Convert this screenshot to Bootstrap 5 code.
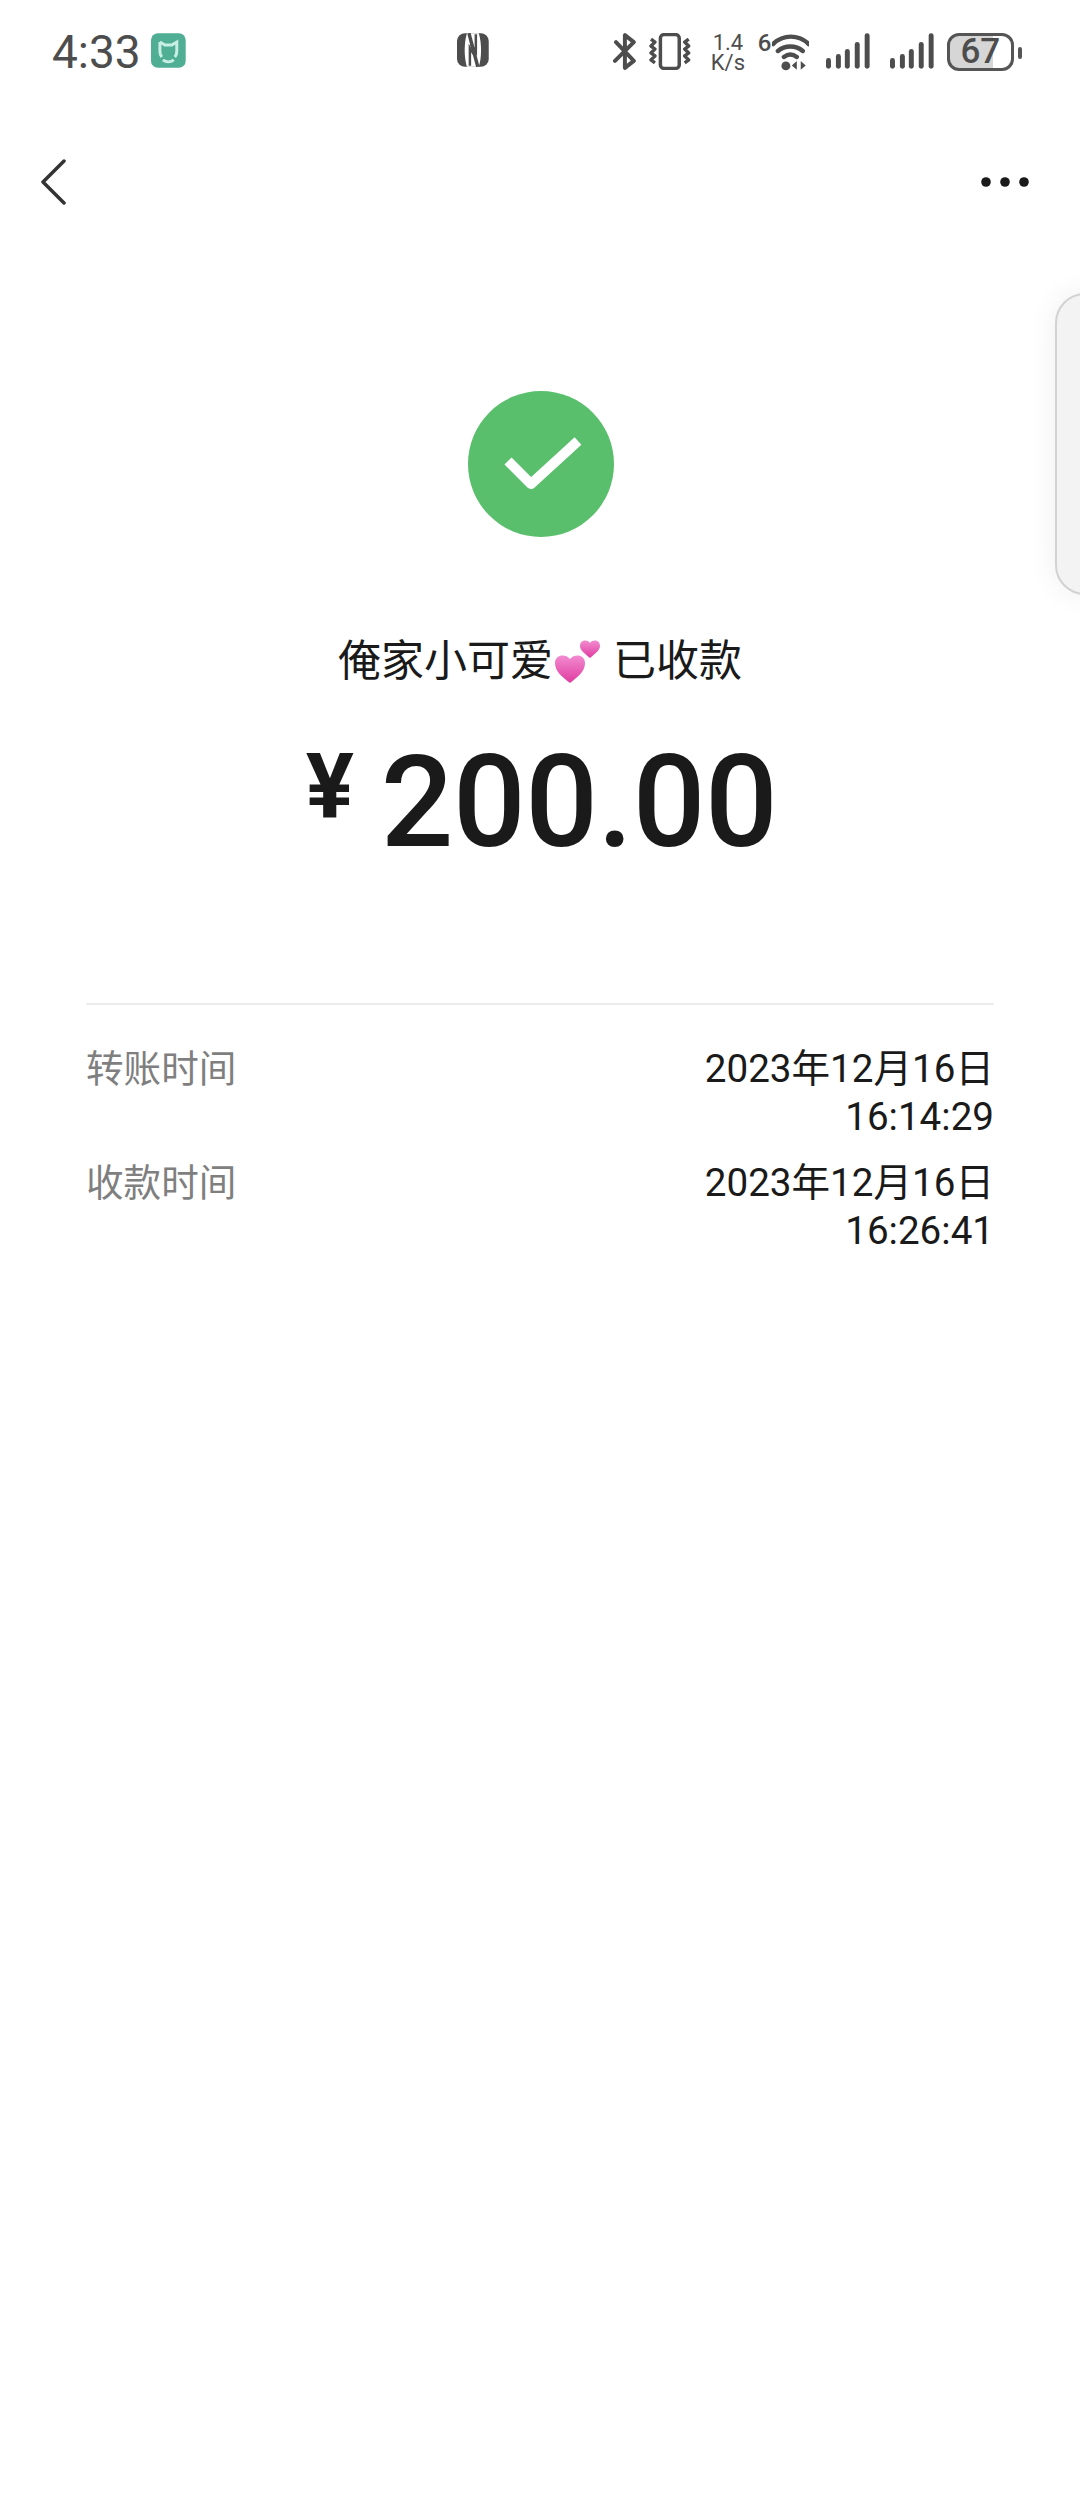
<!DOCTYPE html>
<html lang="zh">
<head>
    <meta charset="UTF-8">
    <title>转账详情</title>
    <link href="https://cdn.jsdelivr.net/npm/bootstrap@5.3.0/dist/css/bootstrap.min.css" rel="stylesheet">
    <style>
        body { background: #fff; font-family: Roboto, "Noto Sans CJK SC", sans-serif; color: #1a1a1a; min-height: 2504px; overflow: hidden; }
        .pantalla { width: 1080px; }
        .barra-estado { height: 72px; padding: 33px 58px 0 52px; color: #4d4d4d; }
        .hora { font-size: 46px; line-height: 38px; width: 100px; }
        .icono-nfc { margin-left: 271px; }
        .icono-bt { margin-left: 124px; }
        .icono-vib { margin-left: 13px; }
        .velocidad { margin-left: 17px; width: 40px; font-size: 22px; line-height: 20px; text-align: center; height: 38px; }
        .wifi-seis { margin-left: 10px; width: 14px; font-size: 24px; line-height: 20px; font-weight: 500; }
        .icono-senal { margin-left: 17px; }
        .icono-senal + .icono-senal { margin-left: 20px; }
        .bateria { margin-left: 13px; width: 68px; height: 38px; border: 3px solid #555; border-radius: 12px; background: linear-gradient(90deg, #d6d6d6 70%, #fff 70%); font-size: 35px; line-height: 32px; text-align: center; font-weight: 500; }
        .bateria-punta { margin-left: 4px; margin-top: 14px; width: 4px; height: 12px; background: #555; border-radius: 2px; }
        .barra-nav { height: 72px; margin-top: 74px; padding: 0 51px 0 40px; }
        .circulo-ok { width: 146px; height: 146px; background: #5abf6c; margin-top: 173px; margin-left: 1px; }
        .marca-ok { margin: 2px 0 0 4px; }
        .nombre { margin-top: 94px; font-size: 43px; line-height: 60px; color: #1a1a1a; }
        .corazones { margin: 0 13px 0 0; }
        .monto { margin-top: 53px; height: 116px; line-height: 116px; }
        .moneda { font-size: 90px; font-weight: 700; line-height: 88px; margin: 0 27px 0 3px; width: 48px; }
        .cifra { font-size: 128px; font-weight: 500; letter-spacing: -.5px; }
        .divisor { margin: 143px 86px 0; border-top: 2px solid #ececec; }
        .detalle { margin: 40px 86px 0; font-size: 38.6px; line-height: 48px; }
        .detalle-fila { margin-bottom: 18px; }
        .etiqueta { color: #7f7f7f; font-size: 37.6px; }
        .valor { color: #1a1a1a; }
        .panel-lateral { position: absolute; left: 1055px; top: 293px; width: 60px; height: 302px; background: #f3f3f3; border: 2px solid #d2d2d2; border-radius: 34px; box-shadow: 0 0 30px rgba(0,0,0,.07); }
    </style>
</head>
<body>
<div class="pantalla">

    <div class="barra-estado d-flex align-items-start">
        <div class="hora">4:33</div>
        <svg width="35" height="35" viewBox="0 0 35 35">
            <rect width="35" height="35" rx="7" fill="#4fae94"/>
            <path d="M9 9l5 3h7l5-3v9a8.500 8.500 0 0 1-2 6M9 9v9a8.500 8.500 0 0 0 2 6" fill="none" stroke="#c9efe4" stroke-width="3"/>
            <path d="M12 27a9 9 0 0 0 11 0" fill="none" stroke="#c9efe4" stroke-width="3"/>
        </svg>
        <svg class="icono-nfc" width="32" height="34" viewBox="0 0 32 34">
            <rect width="32" height="34" rx="8" fill="#4d4d4d"/>
            <path d="M10 0C7 10 7 24 10 34H22C25 24 25 10 22 0Z" fill="#fff"/>
            <path d="M12 0L21 34" stroke="#4d4d4d" stroke-width="3.500"/>
            <path d="M13 33V15l5 8M19 1v18l-5-8" fill="none" stroke="#4d4d4d" stroke-width="2.500"/>
        </svg>
        <svg class="icono-bt" width="24" height="37" viewBox="0 0 24 37">
            <path d="M2 28L21 9 12 2v15M3 9l18 19-9 7V20" fill="none" stroke="#4d4d4d" stroke-width="4" stroke-linecap="round" stroke-linejoin="round"/>
        </svg>
        <svg class="icono-vib" width="42" height="37" viewBox="0 0 42 37">
            <rect x="11.500" y="1.500" width="19" height="34" rx="3.500" fill="none" stroke="#4d4d4d" stroke-width="3.500"/>
            <path d="M2 6l4 3-4 4 4 3-4 4 4 3-4 4 4 3M40 6l-4 3 4 4-4 3 4 4-4 3 4 4-4 3" fill="none" stroke="#4d4d4d" stroke-width="3.400" stroke-linejoin="round"/>
        </svg>
        <div class="velocidad">1.4<br>K/s</div>
        <div class="wifi-seis">6</div>
        <svg width="38" height="38" viewBox="13 0 38 38">
            <path d="M14 11C24 1 40 1 50 11M19 18c7-6 18-6 25 0M25 24c4-3 9-3 13 0" fill="none" stroke="#4d4d4d" stroke-width="4.500" stroke-linecap="round"/>
            <circle cx="27" cy="33" r="4.500" fill="#4d4d4d"/>
            <path d="M38 28v9l-5-4.500zM42 28v9l5-4.500z" fill="#4d4d4d"/>
        </svg>
        <svg class="icono-senal" width="44" height="36" viewBox="0 0 44 36">
            <g fill="#4d4d4d">
                <rect x="0" y="25" width="5" height="11" rx="2.500"/><rect x="10" y="21" width="5" height="15" rx="2.500"/><rect x="19" y="16" width="5" height="20" rx="2.500"/><rect x="29" y="9" width="5" height="27" rx="2.500"/><rect x="39" y="0" width="5" height="36" rx="2.500"/>
            </g>
        </svg>
        <svg class="icono-senal" width="44" height="36" viewBox="0 0 44 36">
            <g fill="#4d4d4d">
                <rect x="0" y="25" width="5" height="11" rx="2.500"/><rect x="10" y="21" width="5" height="15" rx="2.500"/><rect x="19" y="16" width="5" height="20" rx="2.500"/><rect x="29" y="9" width="5" height="27" rx="2.500"/><rect x="39" y="0" width="5" height="36" rx="2.500"/>
            </g>
        </svg>
        <div class="bateria">67</div>
        <div class="bateria-punta"></div>
    </div>

    <div class="barra-nav d-flex justify-content-between align-items-center">
        <svg width="26" height="46" viewBox="0 0 26 46">
            <path d="M24 2L3 23l21 21" fill="none" stroke="#333" stroke-width="3.500" stroke-linecap="round" stroke-linejoin="round"/>
        </svg>
        <svg width="48" height="10" viewBox="0 0 48 10">
            <circle cx="5" cy="5" r="4.800" fill="#1a1a1a"/><circle cx="24" cy="5" r="4.800" fill="#1a1a1a"/><circle cx="43" cy="5" r="4.800" fill="#1a1a1a"/>
        </svg>
    </div>

    <div class="d-flex flex-column align-items-center">
        <div class="circulo-ok rounded-circle d-flex align-items-center justify-content-center">
            <svg class="marca-ok" width="78" height="56" viewBox="0 0 78 56">
                <path d="M4 24l23 23L74 4" fill="none" stroke="#fff" stroke-width="10" stroke-linejoin="round"/>
            </svg>
        </div>
        <div class="nombre d-flex align-items-center">
            <span>俺家小可爱</span>
            <svg class="corazones" width="47" height="43" viewBox="0 0 47 43">
                <defs>
                    <linearGradient id="rosa" x1="0" y1="0" x2="0" y2="1">
                        <stop offset="0" stop-color="#f28bd0"/><stop offset="1" stop-color="#df3c9f"/>
                    </linearGradient>
                </defs>
                <path d="M17 43C8 36 2 31 2 23c0-8 10-10 15-4 5-6 15-4 15 4 0 8-6 13-15 20z" fill="url(#rosa)"/>
                <path d="M37 18c-6-5-10-8-10-12 0-6 7-7 10-3 3-4 10-3 10 3 0 4-4 7-10 12z" fill="url(#rosa)"/>
            </svg>
            <span>已收款</span>
        </div>
        <div class="monto d-flex align-items-start">
            <div class="moneda">¥</div>
            <div class="cifra">200.00</div>
        </div>
    </div>

    <div class="divisor"></div>

    <div class="detalle">
        <div class="detalle-fila d-flex justify-content-between">
            <div class="etiqueta">转账时间</div>
            <div class="valor text-end">2023年12月16日<br>16:14:29</div>
        </div>
        <div class="detalle-fila d-flex justify-content-between">
            <div class="etiqueta">收款时间</div>
            <div class="valor text-end">2023年12月16日<br>16:26:41</div>
        </div>
    </div>

    <div class="panel-lateral"></div>
</div>
<script src="https://cdn.jsdelivr.net/npm/bootstrap@5.3.0/dist/js/bootstrap.bundle.min.js"></script>
</body>
</html>
